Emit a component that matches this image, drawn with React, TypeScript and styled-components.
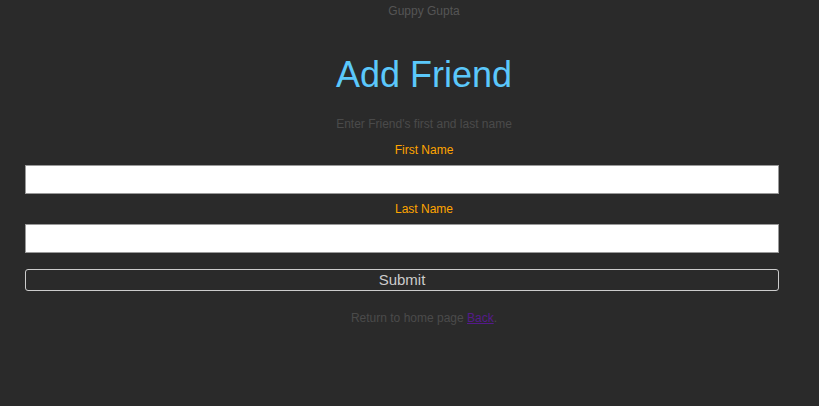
import React from 'react';
import styled, { createGlobalStyle } from 'styled-components';

const GlobalStyle = createGlobalStyle`
  html, body {
    margin: 0;
    padding: 0;
    background: #2a2a2a;
    font-family: "Liberation Sans", Arial, sans-serif;
  }
`;

const Page = styled.div`
  min-height: 406px;
  background: #2a2a2a;
  padding-top: 4px;
  box-sizing: border-box;
`;

const CenterText = styled.div<{ $size?: number; $color: string; $mt?: number }>`
  padding-left: 29px;
  text-align: center;
  font-size: ${p => p.$size ?? 12}px;
  line-height: ${p => Math.round((p.$size ?? 12) * 1.17)}px;
  color: ${p => p.$color};
  margin-top: ${p => p.$mt ?? 0}px;
`;

const Title = styled.h1`
  margin: 36px 0 0;
  padding-left: 29px;
  text-align: center;
  font-size: 36px;
  line-height: 42px;
  font-weight: normal;
  color: #5bc8fb;
`;

const Form = styled.form`
  display: flex;
  flex-direction: column;
  padding: 0 40px 0 25px;
`;

const Label = styled.label<{ $mt: number }>`
  display: block;
  margin-top: ${p => p.$mt}px;
  padding-left: 44px;
  text-align: center;
  font-size: 12px;
  line-height: 14px;
  color: #ffa500;
`;

const Input = styled.input`
  margin-top: 8px;
  width: 754px;
  height: 29px;
  box-sizing: border-box;
  border: 1px solid #999;
  background: #fff;
  padding: 2px 4px;
  font-size: 13px;
  outline: none;
`;

const SubmitButton = styled.button`
  margin-top: 16px;
  width: 754px;
  height: 22px;
  box-sizing: border-box;
  border: 1px solid #ccc;
  border-radius: 3px;
  background: transparent;
  color: #ccc;
  font-family: "Liberation Sans", Arial, sans-serif;
  font-size: 15px;
  line-height: 18px;
  padding: 0;
  cursor: pointer;
`;

const BackLink = styled.a`
  color: #551a8b;
  text-decoration: underline;
`;

export default function App() {
  return (
    <Page>
      <GlobalStyle />
      <CenterText $color="#555">Guppy Gupta</CenterText>
      <Title>Add Friend</Title>
      <CenterText $color="#4a4a4a" $mt={21}>
        Enter Friend's first and last name
      </CenterText>
      <Form onSubmit={e => e.preventDefault()}>
        <Label $mt={12}>First Name</Label>
        <Input type="text" />
        <Label $mt={8}>Last Name</Label>
        <Input type="text" />
        <SubmitButton type="submit">Submit</SubmitButton>
      </Form>
      <CenterText $color="#4a4a4a" $mt={20}>
        Return to home page <BackLink href="#">Back</BackLink>.
      </CenterText>
    </Page>
  );
}
